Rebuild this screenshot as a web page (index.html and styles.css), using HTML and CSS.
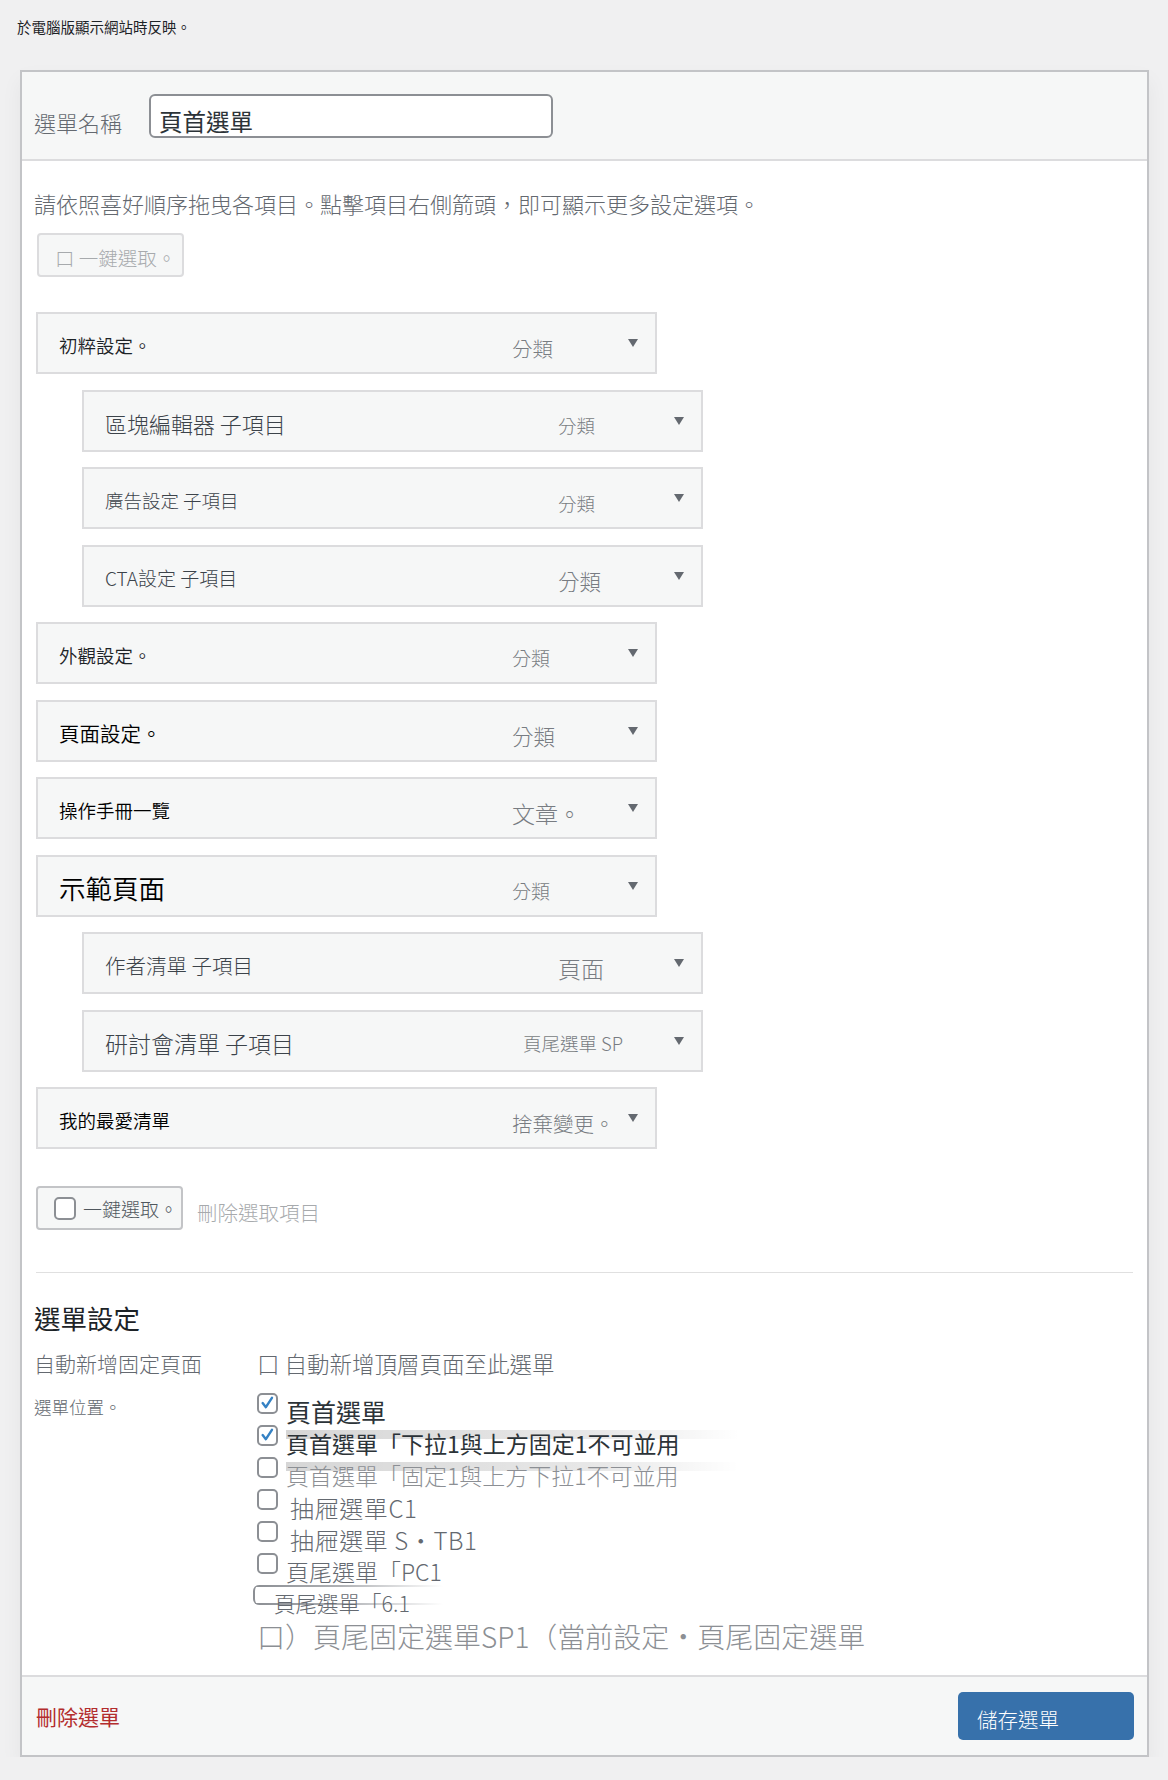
FILE: index.html
```html
<!DOCTYPE html>
<html lang="zh-Hant">
<head>
    <meta charset="UTF-8">
    <meta name="viewport" content="width=device-width, initial-scale=1.0">
    <title>選單 - 頁首選單</title>
    <link rel="stylesheet" href="styles.css">
</head>
<body>
    <p class="note">於電腦版顯示網站時反映。</p>

    <div class="menu-edit">
        <div class="menu-header">
            <label for="menuName" class="menu-name-label">選單名稱</label>
            <input type="text" id="menuName" class="menu-name" value="頁首選單">
        </div>

        <div class="menu-body">
            <p class="drag-help">請依照喜好順序拖曳各項目。點擊項目右側箭頭，即可顯示更多設定選項。</p>
            <div class="bulk-row">
                <span class="btn-bulk is-off">口 一鍵選取。</span>
            </div>

            <ul class="menu-items">
                <li class="item"><span class="item-title sz18">初粹設定。</span><span class="item-type sz20">分類</span><span class="item-arrow"></span></li>
                <li class="item sub"><span class="item-title sz22">區塊編輯器 子項目</span><span class="item-type sz18">分類</span><span class="item-arrow"></span></li>
                <li class="item sub"><span class="item-title sz18">廣告設定 子項目</span><span class="item-type sz18">分類</span><span class="item-arrow"></span></li>
                <li class="item sub"><span class="item-title sz19">CTA設定 子項目</span><span class="item-type sz21">分類</span><span class="item-arrow"></span></li>
                <li class="item"><span class="item-title sz18">外觀設定。</span><span class="item-type sz19">分類</span><span class="item-arrow"></span></li>
                <li class="item"><span class="item-title sz20 dark">頁面設定。</span><span class="item-type sz21">分類</span><span class="item-arrow"></span></li>
                <li class="item"><span class="item-title sz18 dark">操作手冊一覽</span><span class="item-type sz23">文章。</span><span class="item-arrow"></span></li>
                <li class="item"><span class="item-title sz26 dark">示範頁面</span><span class="item-type sz19">分類</span><span class="item-arrow"></span></li>
                <li class="item sub"><span class="item-title sz20">作者清單 子項目</span><span class="item-type sz23">頁面</span><span class="item-arrow"></span></li>
                <li class="item sub"><span class="item-title sz23">研討會清單 子項目</span><span class="item-type sz18 wide">頁尾選單 SP</span><span class="item-arrow"></span></li>
                <li class="item"><span class="item-title sz18 dark">我的最愛清單</span><span class="item-type sz20">捨棄變更。</span><span class="item-arrow"></span></li>
            </ul>

            <div class="bulk-row bottom">
                <label class="btn-bulk"><span class="cb"></span>一鍵選取。</label>
                <span class="delete-selected">刪除選取項目</span>
            </div>

            <hr class="divider">

            <h3 class="settings-title">選單設定</h3>
            <div class="settings">
                <div class="set-label">自動新增固定頁面</div>
                <div class="set-value auto-add">口 自動新增頂層頁面至此選單</div>

                <div class="set-label small">選單位置。</div>
                <div class="set-value">
                    <div class="loc">
                        <span class="cb"><svg viewBox="0 0 21 21"><path d="M4.5 10 L8.5 15 L16 3.5"/></svg></span>
                        <span class="loc-text sz25 c-dark">頁首選單</span>
                    </div>
                    <div class="loc">
                        <span class="cb"><svg viewBox="0 0 21 21"><path d="M4.5 10 L8.5 15 L16 3.5"/></svg></span>
                        <span class="loc-text sz23 c-dark band">頁首選單「下拉1與上方固定1不可並用</span>
                    </div>
                    <div class="loc">
                        <span class="cb"></span>
                        <span class="loc-text sz23 c-light band">頁首選單「固定1與上方下拉1不可並用</span>
                    </div>
                    <div class="loc">
                        <span class="cb"></span>
                        <span class="loc-text c-mid pushed">抽屜選單C1</span>
                    </div>
                    <div class="loc">
                        <span class="cb"></span>
                        <span class="loc-text c-mid pushed">抽屜選單 S・TB1</span>
                    </div>
                    <div class="loc">
                        <span class="cb"></span>
                        <span class="loc-text sz23 c-mid">頁尾選單「PC1</span>
                    </div>
                    <div class="loc ghost">
                        <span class="ghost-box"><span class="ghost-text">頁尾選單「6.1</span></span>
                    </div>
                    <div class="loc last">口）頁尾固定選單SP1（當前設定・頁尾固定選單</div>
                </div>
            </div>
        </div>

        <div class="menu-footer">
            <a href="#" class="delete-menu">刪除選單</a>
            <span class="btn-save">儲存選單</span>
        </div>
    </div>
</body>
</html>
```

FILE: styles.css
```css
body {
    font-family: "Noto Sans CJK TC", "Noto Sans", sans-serif;
    font-weight: 300;
    margin: 0;
    padding: 0;
    background: #f0f0f1;
    color: #1d2327;
}
.note {
    margin: 0;
    padding: 17px 0 0 17px;
    font-size: 14.5px;
    font-weight: 400;
    line-height: 20px;
    color: #1d2327;
}

/* panel */
.menu-edit {
    box-sizing: border-box;
    width: 1129px;
    margin: 33px 0 0 20px;
    background: #fff;
    border: 2px solid #c3c4c7;
    box-shadow: 0 10px 20px rgba(0, 0, 0, 0.05);
}
.menu-header {
    display: flex;
    align-items: center;
    height: 87px;
    padding: 0 12px;
    background: #f6f7f7;
    border-bottom: 2px solid #dcdcde;
}
.menu-name-label {
    font-size: 22px;
    color: #646970;
    padding-top: 12px;
    margin-right: 27px;
}
.menu-name {
    box-sizing: border-box;
    width: 404px;
    height: 44px;
    padding: 10px 8px 0;
    font-family: inherit;
    font-weight: 400;
    font-size: 23.5px;
    color: #2c3338;
    border: 2px solid #8c8f94;
    border-radius: 6px;
    background: #fff;
    outline: none;
}

.menu-body {
    padding: 27px 14px 20px;
}
.drag-help {
    margin: 0 0 0 -2px;
    font-size: 22px;
    line-height: 30px;
    color: #646970;
}

.bulk-row {
    display: flex;
    align-items: center;
    margin-top: 15px;
}
.bulk-row.bottom {
    margin-top: 37px;
}
.btn-bulk {
    box-sizing: border-box;
    display: inline-flex;
    align-items: center;
    width: 147px;
    height: 44px;
    padding: 5px 0 0 16px;
    font-size: 19.5px;
    color: #50575e;
    background: #f6f7f7;
    border: 2px solid #dcdcde;
    border-radius: 4px;
}
.btn-bulk.is-off {
    margin-left: 1px;
    color: #a7aaad;
}
.bulk-row.bottom .btn-bulk {
    padding: 0 0 0 16px;
    border-color: #c3c4c7;
    font-size: 19px;
}
.bulk-row.bottom .btn-bulk .cb {
    width: 22px;
    height: 23px;
    margin-right: 7px;
}
.delete-selected {
    margin-left: 14px;
    padding-top: 7px;
    font-size: 20.5px;
    color: #a7aaad;
}

/* menu items */
.menu-items {
    list-style: none;
    margin: 35px 0 0;
    padding: 0;
    display: flex;
    flex-direction: column;
    gap: 15.5px;
}
.item {
    box-sizing: border-box;
    display: flex;
    align-items: center;
    width: 621px;
    height: 62px;
    padding: 0 17px 0 21px;
    background: #f6f7f7;
    border: 2px solid #dcdcde;
}
.item.sub {
    margin-left: 46px;
}
.item-title {
    flex: 1;
    white-space: nowrap;
    padding-top: 4px;
    font-weight: 350;
    color: #1d2327;
}
.item.sub .item-title {
    font-weight: 300;
    color: #3c434a;
}
.item-title.dark {
    color: #000;
}
.item-type {
    width: 116px;
    white-space: nowrap;
    padding-top: 9px;
    color: #787c82;
}
.item-type.wide {
    width: 151px;
    padding-top: 5px;
}
.item-arrow {
    width: 0;
    height: 0;
    border-left: 5.5px solid transparent;
    border-right: 5.5px solid transparent;
    border-top: 8px solid #646970;
}

.sz18 { font-size: 18.5px; }
.sz19 { font-size: 19px; }
.sz20 { font-size: 20.5px; }
.sz21 { font-size: 21.5px; }
.sz22 { font-size: 22px; }
.sz23 { font-size: 23px; }
.sz25 { font-size: 25px; }
.sz26 { font-size: 26.5px; }

.divider {
    margin: 42px 0 0;
    border: 0;
    border-top: 1px solid #e0e0e0;
}

/* menu settings */
.settings-title {
    margin: 28px 0 0 -2px;
    font-size: 26.5px;
    font-weight: 400;
    line-height: 34px;
    color: #1d2327;
}
.settings {
    display: grid;
    grid-template-columns: 223px 1fr;
    row-gap: 15px;
    margin: 13px 0 0 -2px;
}
.set-label {
    font-size: 21px;
    line-height: 30px;
    color: #646970;
}
.set-label.small {
    font-size: 17.5px;
    line-height: 28px;
}
.set-value.auto-add {
    font-size: 22.5px;
    line-height: 30px;
    color: #646970;
}

.cb {
    box-sizing: border-box;
    display: inline-block;
    flex: none;
    width: 21px;
    height: 21px;
    border: 2px solid #8c8f94;
    border-radius: 5px;
    background: #fff;
}
.cb svg {
    display: block;
    width: 17px;
    height: 17px;
}
.cb svg path {
    fill: none;
    stroke: #3582c4;
    stroke-width: 3;
    stroke-linecap: round;
    stroke-linejoin: round;
}

.loc {
    display: flex;
    align-items: flex-start;
    height: 32px;
}
.loc-text {
    margin-left: 8px;
    padding-top: 5px;
    line-height: 27px;
    white-space: nowrap;
}
.loc-text.pushed {
    margin-left: 12px;
    font-size: 24px;
    letter-spacing: 0.6px;
}
.loc-text.band {
    padding-right: 60px;
    background: linear-gradient(to right, rgba(0, 0, 0, 0.16), rgba(0, 0, 0, 0.09) 70%, rgba(0, 0, 0, 0)) no-repeat 0 5px / 100% 9px;
}
.c-dark { color: #2c3338; font-weight: 400; }
.c-mid { color: #646970; }
.c-light { color: #8c8f94; }

/* half drawn row, its outline fades out to the right */
.loc.ghost {
    height: 32px;
}
.ghost-box {
    box-sizing: border-box;
    display: block;
    width: 190px;
    height: 20px;
    margin-left: -4px;
    border-left: 2px solid #8c8f94;
    border-radius: 6px 0 0 6px;
    background:
        linear-gradient(to right, #8c8f94, rgba(140, 143, 148, 0.7) 45%, rgba(140, 143, 148, 0)) left top / 100% 2px no-repeat,
        linear-gradient(to right, #8c8f94, rgba(140, 143, 148, 0.7) 45%, rgba(140, 143, 148, 0)) left bottom / 100% 2px no-repeat;
}
.ghost-text {
    display: block;
    padding: 8px 0 0 19px;
    font-size: 21.5px;
    line-height: 20px;
    color: #646970;
    white-space: nowrap;
}
.loc.last {
    height: 38px;
    font-size: 28px;
    line-height: 38px;
    color: #8c8f94;
    white-space: nowrap;
}

/* footer */
.menu-footer {
    display: flex;
    align-items: center;
    justify-content: space-between;
    height: 78px;
    padding: 0 13px 0 14px;
    background: #f6f7f7;
    border-top: 2px solid #dcdcde;
}
.delete-menu {
    font-size: 21px;
    font-weight: 400;
    color: #b32d2e;
    text-decoration: none;
}
.btn-save {
    box-sizing: border-box;
    display: flex;
    align-items: center;
    width: 176px;
    height: 48px;
    padding: 6px 0 0 19px;
    font-size: 20.5px;
    color: #fff;
    background: #3771ab;
    border-radius: 5px;
}
```
